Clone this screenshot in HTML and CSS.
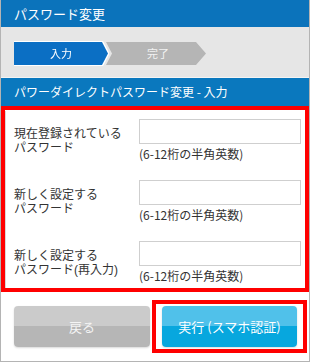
FILE: index.html
```html
<!doctype html>
<html lang="ja">
  <head>
    <meta charset="UTF-8" />
    <meta name="viewport" content="width=device-width, initial-scale=1.0" />
    <title>パスワード変更</title>
    <link rel="stylesheet" href="styles.css">
  </head>
  <body>
    <div class="page">
      <div class="header">パスワード変更</div>

      <!-- Steps -->
      <div class="steps">
        <div class="step-wrap">
          <div class="step step-active">入力</div>
        </div>
        <div class="step step-next">完了</div>
      </div>

      <div class="section-title">パワーダイレクトパスワード変更 - 入力</div>

      <div class="form-box">
        <div class="row">
          <div class="label">現在登録されている<br />パスワード</div>
          <div class="field">
            <input type="password" class="text-input" maxlength="12" />
            <p class="hint">(6-12桁の半角英数)</p>
          </div>
        </div>
        <div class="row">
          <div class="label">新しく設定する<br />パスワード</div>
          <div class="field">
            <input type="password" class="text-input" maxlength="12" />
            <p class="hint">(6-12桁の半角英数)</p>
          </div>
        </div>
        <div class="row">
          <div class="label">新しく設定する<br />パスワード(再入力)</div>
          <div class="field">
            <input type="password" class="text-input" maxlength="12" />
            <p class="hint">(6-12桁の半角英数)</p>
          </div>
        </div>
      </div>

      <div class="actions">
        <button class="btn btn-back">戻る</button>
        <div class="exec-frame">
          <button class="btn btn-exec">実行 (スマホ認証)</button>
        </div>
      </div>
    </div>
  </body>
</html>
```

FILE: styles.css
```css
body {
  margin: 0;
  font-family: "Noto Sans CJK JP", "Noto Sans", sans-serif;
  color: #333;
  background-color: #fff;
}
.page {
  width: 310px;
  height: 362px;
  box-sizing: border-box;
  border: 1px solid #b4b4b4;
  border-top: none;
  background-color: #fff;
}
.header {
  height: 27px;
  line-height: 27px;
  padding-left: 13px;
  background-color: #0b73bb;
  color: #fff;
  font-size: 13px;
}
/* Steps */
.steps {
  height: 51px;
  box-sizing: border-box;
  padding: 15px 13px 0;
  background-color: #e6e6e6;
  border-bottom: 1px solid #f4f4f4;
  display: flex;
}
.step-wrap {
  filter: drop-shadow(1px 0 0 #fff) drop-shadow(0 1px 0 #fff)
    drop-shadow(0 -1px 0 #fff);
  position: relative;
  z-index: 1;
}
.step {
  height: 23px;
  line-height: 23px;
  text-align: center;
  color: #fff;
  font-size: 11px;
}
.step-active {
  width: 94px;
  background-color: #0b6fc4;
  clip-path: polygon(0 0, 88px 0, 100% 50%, 88px 100%, 0 100%);
}
.step-next {
  width: 96px;
  margin-left: -2px;
  padding-left: 4px;
  background-color: #b5b5b5;
  color: #f2f2f2;
  clip-path: polygon(0 0, 90px 0, 100% 50%, 90px 100%, 0 100%, 6px 50%);
}
.section-title {
  height: 28px;
  line-height: 28px;
  padding-left: 13px;
  background-color: #0a78be;
  color: #fff;
  font-size: 12px;
}
/* Form */
.form-box {
  height: 186px;
  box-sizing: border-box;
  border: 4px solid #f00;
  padding: 1px 3px 0 0;
}
.row {
  height: 61px;
  box-sizing: border-box;
  padding-top: 8px;
  display: flex;
  align-items: flex-start;
  border-left: 1px solid #d8d8d8;
}
.row:last-child {
  height: 55px;
}
.label {
  width: 124px;
  padding: 8px 0 0 8px;
  box-sizing: border-box;
  font-family: "Liberation Sans", "Noto Sans CJK JP", sans-serif;
  font-size: 12px;
  line-height: 14px;
}
.field {
  flex: 1;
  margin-left: 9px;
}
.text-input {
  display: block;
  width: 162px;
  height: 25px;
  box-sizing: border-box;
  border: 1px solid #cfcfcf;
  margin: 0;
  padding: 2px 4px;
}
.hint {
  margin: 3px 0 0;
  font-size: 12px;
  line-height: 14px;
}
/* Buttons */
.actions {
  display: flex;
  align-items: flex-start;
  padding: 8px 0 0 13px;
}
.btn {
  height: 41px;
  border: none;
  border-radius: 4px;
  color: #fff;
  font-family: "Noto Sans CJK JP", "Noto Sans", sans-serif;
  font-size: 13px;
  cursor: pointer;
  box-shadow: 0 1px 2px rgba(0, 0, 0, 0.15);
}
.btn-back {
  width: 136px;
  margin-top: 6px;
  background: linear-gradient(#cbcbcb 50%, #b6b6b6 50%);
  color: #f4f4f4;
}
.exec-frame {
  margin-left: 2px;
  border: 4px solid #f00;
  padding: 2px 6px;
  display: flex;
}
.btn-exec {
  width: 135px;
  background: linear-gradient(#50c1ea 50%, #07a7de 50%);
}
```
